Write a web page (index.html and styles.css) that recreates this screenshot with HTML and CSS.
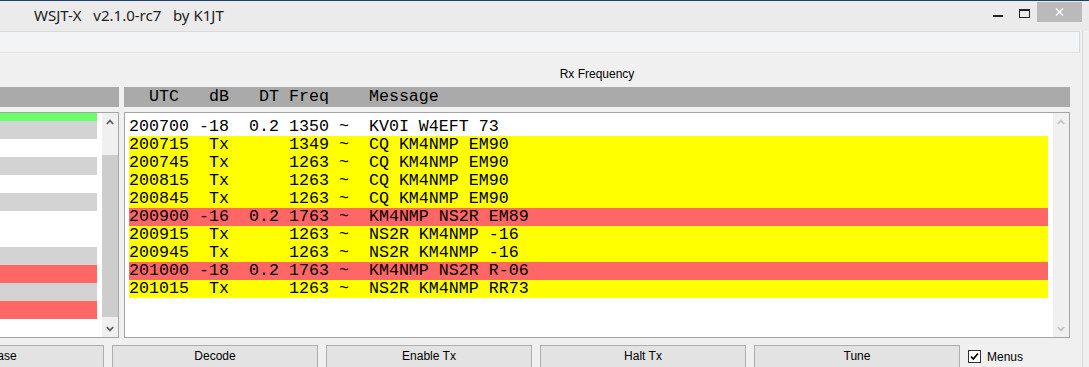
FILE: index.html
```html
<!DOCTYPE html>
<html>
<head>
<meta charset="utf-8">
<title>WSJT-X</title>
<link rel="stylesheet" href="styles.css">
</head>
<body>
<div class="titlebar">
  <div class="title">WSJT-X   v2.1.0-rc7   by K1JT</div>
  <div class="winctl">
    <div class="wbtn wmin"><span class="min-ico"></span></div>
    <div class="wbtn wmax"><span class="max-ico"></span></div>
    <div class="wbtn wclose">
      <svg width="9" height="8" viewBox="0 0 9 8"><path d="M1 0.5 L8 7.5 M8 0.5 L1 7.5" stroke="#fff" stroke-width="1.3" fill="none"/></svg>
    </div>
  </div>
</div>
<div class="main">
  <div class="client">
    <div class="menubar"></div>
    <div class="panes">
      <div class="pane left">
        <div class="pane-label"></div>
        <div class="hdr"></div>
        <div class="box">
          <div class="list">
            <div class="lrow green first"></div>
            <div class="lrow grey"></div>
            <div class="lrow"></div>
            <div class="lrow grey"></div>
            <div class="lrow"></div>
            <div class="lrow grey"></div>
            <div class="lrow"></div>
            <div class="lrow"></div>
            <div class="lrow grey"></div>
            <div class="lrow red"></div>
            <div class="lrow grey"></div>
            <div class="lrow red"></div>
          </div>
          <div class="sbar dark">
            <div class="sarrow"><svg width="8" height="6" viewBox="0 0 8 6"><path d="M0.8 5 L4 1.6 L7.2 5" stroke="#606060" stroke-width="1.8" fill="none"/></svg></div>
            <div class="strack"><div class="thumb"></div></div>
            <div class="sarrow"><svg width="8" height="6" viewBox="0 0 8 6"><path d="M0.8 1 L4 4.4 L7.2 1" stroke="#606060" stroke-width="1.8" fill="none"/></svg></div>
          </div>
        </div>
      </div>
      <div class="pane right">
        <div class="pane-label">Rx Frequency</div>
        <div class="hdr mono">  UTC   dB   DT Freq    Message</div>
        <div class="box">
          <div class="text mono">
            <div class="r">200700 -18  0.2 1350 ~  KV0I W4EFT 73</div>
            <div class="r y">200715  Tx      1349 ~  CQ KM4NMP EM90</div>
            <div class="r y">200745  Tx      1263 ~  CQ KM4NMP EM90</div>
            <div class="r y">200815  Tx      1263 ~  CQ KM4NMP EM90</div>
            <div class="r y">200845  Tx      1263 ~  CQ KM4NMP EM90</div>
            <div class="r red">200900 -16  0.2 1763 ~  KM4NMP NS2R EM89</div>
            <div class="r y">200915  Tx      1263 ~  NS2R KM4NMP -16</div>
            <div class="r y">200945  Tx      1263 ~  NS2R KM4NMP -16</div>
            <div class="r red">201000 -18  0.2 1763 ~  KM4NMP NS2R R-06</div>
            <div class="r y">201015  Tx      1263 ~  NS2R KM4NMP RR73</div>
          </div>
          <div class="sbar light">
            <div class="sarrow"><svg width="8" height="6" viewBox="0 0 8 6"><path d="M0.8 5 L4 1.6 L7.2 5" stroke="#c4c4c4" stroke-width="1.8" fill="none"/></svg></div>
            <div class="strack"></div>
            <div class="sarrow"><svg width="8" height="6" viewBox="0 0 8 6"><path d="M0.8 1 L4 4.4 L7.2 1" stroke="#c4c4c4" stroke-width="1.8" fill="none"/></svg></div>
          </div>
        </div>
      </div>
    </div>
    <div class="buttons">
      <div class="btn">Erase</div>
      <div class="btn">Decode</div>
      <div class="btn">Enable Tx</div>
      <div class="btn">Halt Tx</div>
      <div class="btn">Tune</div>
      <label class="chk">
        <span class="cbox"><svg width="11" height="11" viewBox="0 0 11 11"><path d="M2 5.5 L4.3 8 L9 2.5" stroke="#000" stroke-width="1.8" fill="none"/></svg></span>
        <span>Menus</span>
      </label>
    </div>
  </div>
  <div class="edge"></div>
</div>
</body>
</html>
```

FILE: styles.css
```css
* { box-sizing: border-box; }
html, body { margin: 0; padding: 0; }
body {
  width: 1089px;
  height: 367px;
  overflow: hidden;
  background: #f0f0f0;
  font-family: "Liberation Sans", Arial, sans-serif;
  color: #000;
}

.titlebar {
  height: 31px;
  background: #ebebeb;
  border-top: 1px solid #1d3d73;
  display: flex;
  align-items: flex-start;
}
.title {
  font-family: "Noto Sans", "Open Sans", sans-serif;
  font-size: 15px;
  line-height: 20px;
  color: #222;
  white-space: pre;
  padding-left: 34px;
  padding-top: 4px;
}
.winctl {
  margin-left: auto;
  margin-right: 7px;
  margin-top: 1px;
  display: flex;
}
.wbtn {
  height: 20px;
  display: flex;
  align-items: center;
  justify-content: center;
}
.wmin, .wmax { width: 26px; }
.wclose { width: 45px; background: #bababa; }
.min-ico {
  display: block;
  width: 10px;
  height: 2px;
  background: #222;
  margin-top: 7px;
}
.max-ico {
  display: block;
  width: 11px;
  height: 9px;
  border: 1px solid #222;
  border-top-width: 2px;
  margin-top: 3px;
}

.main {
  display: flex;
  height: 336px;
}
.client {
  width: 1082px;
}
.edge {
  width: 7px;
  margin-left: 2px;
  border-left: 1px solid #d6d6d6;
}
.menubar {
  height: 22px;
  background: #f3f4f6;
  border-top: 1px solid #dadada;
  border-bottom: 1px solid #e2e2e2;
  border-right: 1px solid #dadada;
}

.panes {
  display: flex;
  gap: 5px;
}
.pane {
  display: flex;
  flex-direction: column;
}
.pane.left { width: 119px; }
.pane.right { width: 946px; }
.pane-label {
  height: 34px;
  padding-top: 14px;
  font-size: 12px;
  line-height: 14px;
  text-align: center;
}
.hdr {
  height: 20px;
  background: #aaaaaa;
}
.mono {
  font-family: "Liberation Mono", "Courier New", monospace;
  font-size: 16.667px;
}
.hdr.mono {
  white-space: pre;
  line-height: 20px;
  padding-left: 5px;
}
.box {
  margin-top: 5px;
  height: 226px;
  background: #fff;
  border: 1px solid #a5a5a5;
  display: flex;
  overflow: hidden;
}
.left .box { border-left: none; }

.list {
  width: 97px;
  margin-right: 5px;
}
.lrow { height: 18px; }
.lrow.first { height: 8px; }
.green { background: #66ff66; }
.grey { background: #d3d3d3; }
.red { background: #ff6666; }

.sbar {
  width: 16px;
  background: #f0f0f0;
  display: flex;
  flex-direction: column;
}
.sarrow {
  height: 17px;
  display: flex;
  align-items: center;
  justify-content: center;
}
.strack {
  flex: 1;
  padding-top: 25px;
}
.thumb {
  height: 162px;
  background: #cdcdcd;
}

.text {
  width: 919px;
  margin-left: 4px;
  margin-right: 5px;
  padding-top: 5px;
}
.r {
  white-space: pre;
  height: 18px;
  line-height: 18px;
}
.r.y { background: #ffff00; }
.r.red { background: #ff6666; }

.buttons {
  display: flex;
  gap: 8px;
  margin-top: 7px;
  margin-left: -102px;
  align-items: flex-start;
}
.btn {
  flex: 0 0 206px;
  height: 23px;
  background: #e3e3e3;
  border: 1px solid #adadad;
  font-size: 12px;
  line-height: 21px;
  text-align: center;
}
.chk {
  display: flex;
  align-items: center;
  gap: 6px;
  height: 23px;
  font-size: 12px;
}
.cbox {
  width: 13px;
  height: 13px;
  border: 1px solid #333;
  background: #fff;
  display: flex;
  align-items: center;
  justify-content: center;
}
```
